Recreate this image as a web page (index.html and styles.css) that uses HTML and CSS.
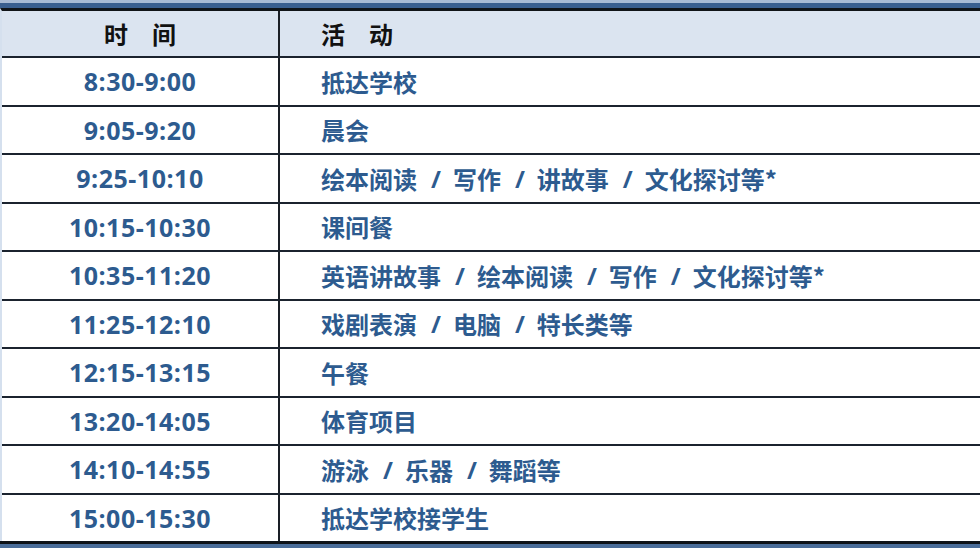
FILE: index.html
```html
<!DOCTYPE html>
<html lang="zh">
<head>
<meta charset="utf-8">
<link rel="stylesheet" href="styles.css">
</head>
<body>
<div class="sheet">
  <div class="topline"></div>
  <div class="band"></div>
  <div class="table">
    <div class="row head">
      <div class="c1">时　间</div>
      <div class="c2">活　动</div>
    </div>
    <div class="row"><div class="c1">8:30-9:00</div><div class="c2">抵达学校</div></div>
    <div class="row"><div class="c1">9:05-9:20</div><div class="c2">晨会</div></div>
    <div class="row"><div class="c1">9:25-10:10</div><div class="c2">绘本阅读<span class="sep">/</span>写作<span class="sep">/</span>讲故事<span class="sep">/</span>文化探讨等*</div></div>
    <div class="row"><div class="c1">10:15-10:30</div><div class="c2">课间餐</div></div>
    <div class="row"><div class="c1">10:35-11:20</div><div class="c2">英语讲故事<span class="sep">/</span>绘本阅读<span class="sep">/</span>写作<span class="sep">/</span>文化探讨等*</div></div>
    <div class="row"><div class="c1">11:25-12:10</div><div class="c2">戏剧表演<span class="sep">/</span>电脑<span class="sep">/</span>特长类等</div></div>
    <div class="row"><div class="c1">12:15-13:15</div><div class="c2">午餐</div></div>
    <div class="row"><div class="c1">13:20-14:05</div><div class="c2">体育项目</div></div>
    <div class="row"><div class="c1">14:10-14:55</div><div class="c2">游泳<span class="sep">/</span>乐器<span class="sep">/</span>舞蹈等</div></div>
    <div class="row last"><div class="c1">15:00-15:30</div><div class="c2">抵达学校接学生</div></div>
  </div>
  <div class="bottomline"></div>
  <div class="bottomband"></div>
</div>
</body>
</html>
```
FILE: styles.css
```css
html, body {
  margin: 0;
  padding: 0;
  background: #ffffff;
}
.sheet {
  width: 980px;
  height: 549px;
  overflow: hidden;
  display: flex;
  flex-direction: column;
  font-family: "Open Sans", "Noto Sans CJK SC", sans-serif;
  font-weight: 700;
  font-size: 24px;
  color: #2d5b8f;
}
.topline {
  height: 3px;
  background: #a9bbd4;
}
.band {
  height: 5px;
  background: #3a5f8f;
}
.table {
  display: flex;
  flex-direction: column;
  border-top: 3px solid #101418;
  border-left: 2px solid #d5e0ee;
}
.row {
  display: flex;
  height: 46.5px;
  border-bottom: 2px solid #1b232e;
}
.row.head {
  height: 45px;
  background: #dbe4f0;
  color: #111111;
  font-family: "Noto Sans CJK SC", sans-serif;
  font-size: 24px;
}
.row.last {
  border-bottom: none;
}
.c1 {
  width: 276px;
  flex: none;
  border-right: 2px solid #1a1f26;
  display: flex;
  align-items: center;
  justify-content: center;
  font-size: 25px;
  letter-spacing: 0.5px;
}
.row.head .c1 {
  font-size: 24px;
  letter-spacing: 0;
}
.c2 {
  flex: 1;
  display: flex;
  align-items: center;
  padding-left: 41px;
  white-space: nowrap;
  font-family: "Noto Sans CJK SC", sans-serif;
}
.c2 .sep {
  font-family: "Open Sans", sans-serif;
  margin: 0 12px 0 14px;
}
.bottomline {
  height: 3px;
  background: #0e1318;
}
.bottomband {
  height: 4px;
  background: #4a6d99;
}
```
